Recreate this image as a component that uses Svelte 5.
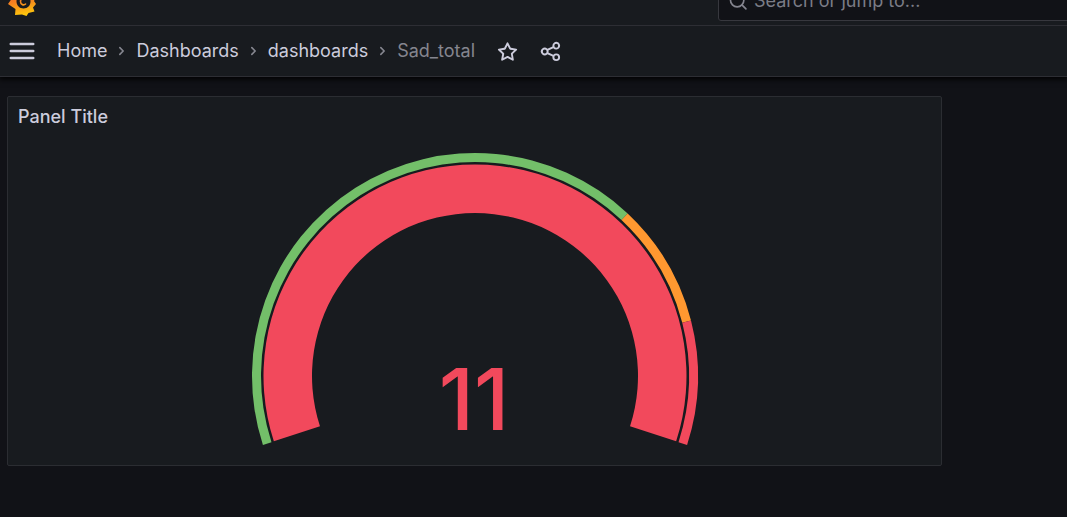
<script>
  const crumbs = ['Home', 'Dashboards', 'dashboards', 'Sad_total'];
  const center = { x: 223, y: 223 };
  const value = 11;

  const bands = [
    { from: 0, to: 0.7, color: '#73bf69' },
    { from: 0.7, to: 0.85, color: '#ff9830' },
    { from: 0.85, to: 1, color: '#f2495c' },
  ];

  function point(fraction, radius) {
    const angle = ((198 - fraction * 216) * Math.PI) / 180;
    return `${center.x + radius * Math.cos(angle)} ${center.y - radius * Math.sin(angle)}`;
  }

  function arc(from, to, inner, outer) {
    const large = (to - from) * 216 > 180 ? 1 : 0;
    return `M${point(from, outer)} A${outer} ${outer} 0 ${large} 1 ${point(to, outer)} L${point(to, inner)} A${inner} ${inner} 0 ${large} 0 ${point(from, inner)} Z`;
  }
</script>

<div class="page">
  <header>
    <div class="topbar">
      <a class="logo" href="#home" aria-label="Grafana">
        <svg viewBox="0 0 30 32" width="30" height="32">
          <defs>
            <linearGradient id="flame" gradientUnits="userSpaceOnUse" x1="12" y1="4" x2="17" y2="31">
              <stop offset="0" stop-color="#f05a28" />
              <stop offset="0.5" stop-color="#f58220" />
              <stop offset="1" stop-color="#fdc70c" />
            </linearGradient>
          </defs>
          <path fill="url(#flame)" fill-rule="evenodd" d="M14 0l4 4 6-1 1 6 4 4-2 4 2 3-3 3.500 1.500 4-6 1.500-2 3-4.500-1.500-7 .5.500-6L1 20l3.500-5L2 9l5-2 2-5 4 1ZM16.500 9.500a8 8 0 0 0-7 8c0 4.200 3.200 7 7 7 4.200 0 7-3.200 7-7 0-4.500-3-8-7-8Z" />
          <path fill="none" stroke="url(#flame)" stroke-width="1.600" stroke-linecap="round" d="M18.500 20c-1.500 1.500-5 1-5-2.500s5-5.500 8-2.500" />
        </svg>
      </a>
      <label class="search">
        <svg viewBox="0 0 24 24" width="20" height="20" fill="none" stroke="currentColor" stroke-width="2" stroke-linecap="round">
          <circle cx="11" cy="11" r="8" /><path d="M17 17l4.500 4.500" />
        </svg>
        <input type="text" aria-label="Search" placeholder="Search or jump to..." />
      </label>
    </div>
    <div class="navbar">
      <button class="menu" aria-label="Menu">
        <svg viewBox="0 0 26 18" width="26" height="18" stroke="currentColor" stroke-width="2.600" stroke-linecap="round">
          <path d="M1.800 2h22.400M1.800 9h22.400M1.800 16h22.400" />
        </svg>
      </button>
      <nav aria-label="Breadcrumbs">
        {#each crumbs as crumb, i}
          {#if i > 0}
            <svg class="chevron" viewBox="0 0 24 24" width="19" height="20" fill="currentColor">
              <path d="M14.830 11.290 10.590 7.050a1 1 0 0 0-1.420 0 1 1 0 0 0 0 1.410L12.710 12 9.170 15.540a1 1 0 0 0 0 1.410 1 1 0 0 0 .71.29 1 1 0 0 0 .71-.29l4.240-4.240A1 1 0 0 0 14.830 11.290Z" />
            </svg>
          {/if}
          {#if i < crumbs.length - 1}
            <a href="#{crumb}">{crumb}</a>
          {:else}
            <span class="current">{crumb}</span>
          {/if}
        {/each}
      </nav>
      <div class="actions">
        <button aria-label="Mark as favorite">
          <svg viewBox="0 0 24 24" width="23" height="23" fill="currentColor">
            <path d="M22,9.67A1,1,0,0,0,21.14,9l-5.69-.83L12.9,3a1,1,0,0,0-1.8,0L8.55,8.16,2.86,9a1,1,0,0,0-.81.68,1,1,0,0,0,.25,1l4.13,4-1,5.68A1,1,0,0,0,6.9,21.44L12,18.77l5.1,2.67a.93.93,0,0,0,.46.12,1,1,0,0,0,.59-.19,1,1,0,0,0,.4-1l-1-5.68,4.13-4A1,1,0,0,0,22,9.67Zm-6.15,4a1,1,0,0,0-.29.88l.72,4.2-3.76-2a1.06,1.06,0,0,0-.94,0l-3.76,2,.72-4.2a1,1,0,0,0-.29-.88l-3-3,4.21-.61a1,1,0,0,0,.76-.55L12,5.7l1.88,3.82a1,1,0,0,0,.76.55l4.21.61Z" />
          </svg>
        </button>
        <button aria-label="Share dashboard">
          <svg viewBox="0 0 24 24" width="23" height="23" fill="currentColor">
            <path d="M18,14a4,4,0,0,0-3.08,1.48l-5.1-2.35a3.64,3.64,0,0,0,0-2.26l5.1-2.35A4,4,0,1,0,14,6a4.17,4.17,0,0,0,.07.71L8.79,9.14a4,4,0,1,0,0,5.72l5.28,2.43A4.17,4.17,0,0,0,14,18a4,4,0,1,0,4-4ZM18,4a2,2,0,1,1-2,2A2,2,0,0,1,18,4ZM6,14a2,2,0,1,1,2-2A2,2,0,0,1,6,14Zm12,6a2,2,0,1,1,2-2A2,2,0,0,1,18,20Z" />
          </svg>
        </button>
      </div>
    </div>
  </header>

  <main>
    <section class="panel">
      <h2>Panel Title</h2>
      <div class="gauge">
        <svg viewBox="0 0 446 294" width="446" height="294" role="img" aria-label="Gauge">
          {#each bands as band}
            <path d={arc(band.from, band.to, 214, 223)} fill={band.color} />
          {/each}
          <path d={arc(0, 1, 163, 211.5)} fill="#f2495c" />
          <text x="222" y="277" text-anchor="middle">{value}</text>
        </svg>
      </div>
    </section>
  </main>
</div>

<style>
  :global(body) {
    margin: 0;
    background: #111217;
  }
  .page {
    min-height: 100vh;
    background: #111217;
    color: #ccccdc;
    font-family: Inter, "Liberation Sans", sans-serif;
    font-size: 18px;
    line-height: 24px;
  }
  header {
    position: relative;
    background: #181b1f;
    border-bottom: 1px solid #2d2e34;
    box-shadow: 0 1px 6px 1px #000000;
  }
  .topbar {
    box-sizing: border-box;
    height: 26px;
    padding-left: 7px;
    display: grid;
    grid-template-columns: 711px minmax(0, 1fr);
    grid-template-rows: 25px;
    align-items: end;
    overflow: hidden;
    border-bottom: 1px solid #2d2e34;
  }
  .logo {
    display: flex;
    padding-bottom: 9px;
  }
  .search {
    box-sizing: border-box;
    height: 40px;
    margin: 0 -8px 4px 0;
    padding: 0 9px;
    display: flex;
    align-items: center;
    gap: 6px;
    background: #111217;
    border: 1px solid #37383e;
    border-radius: 3px;
    color: #85858f;
  }
  input {
    flex: 1;
    min-width: 0;
    padding: 0;
    border: 0;
    outline: 0;
    background: none;
    color: inherit;
    font: inherit;
  }
  input::placeholder {
    color: #7b7c86;
    opacity: 1;
  }
  .navbar {
    height: 50px;
    padding: 0 9px;
    display: flex;
    align-items: center;
  }
  button {
    padding: 0;
    border: 0;
    background: none;
    color: inherit;
    display: flex;
  }
  nav {
    display: flex;
    align-items: center;
    gap: 5px;
    margin-left: 22px;
  }
  nav a {
    color: inherit;
    text-decoration: none;
  }
  .chevron,
  .current {
    color: #85868f;
  }
  .actions {
    display: flex;
    gap: 20px;
    margin-left: 21px;
  }
  main {
    display: grid;
    grid-template-columns: minmax(0, 1fr) 118px;
    padding: 19px 7px;
  }
  .panel {
    background: #181b1f;
    border: 1px solid #2b2d32;
    border-radius: 2px;
  }
  h2 {
    margin: 0;
    padding: 8px 10px;
    font-size: 18px;
    font-weight: 500;
    line-height: 24px;
  }
  .gauge {
    display: flex;
    justify-content: center;
    padding: 16px 0 18px;
  }
  .gauge svg {
    overflow: visible;
  }
  text {
    fill: #f2495c;
    font-size: 85px;
    font-weight: 500;
  }
</style>
